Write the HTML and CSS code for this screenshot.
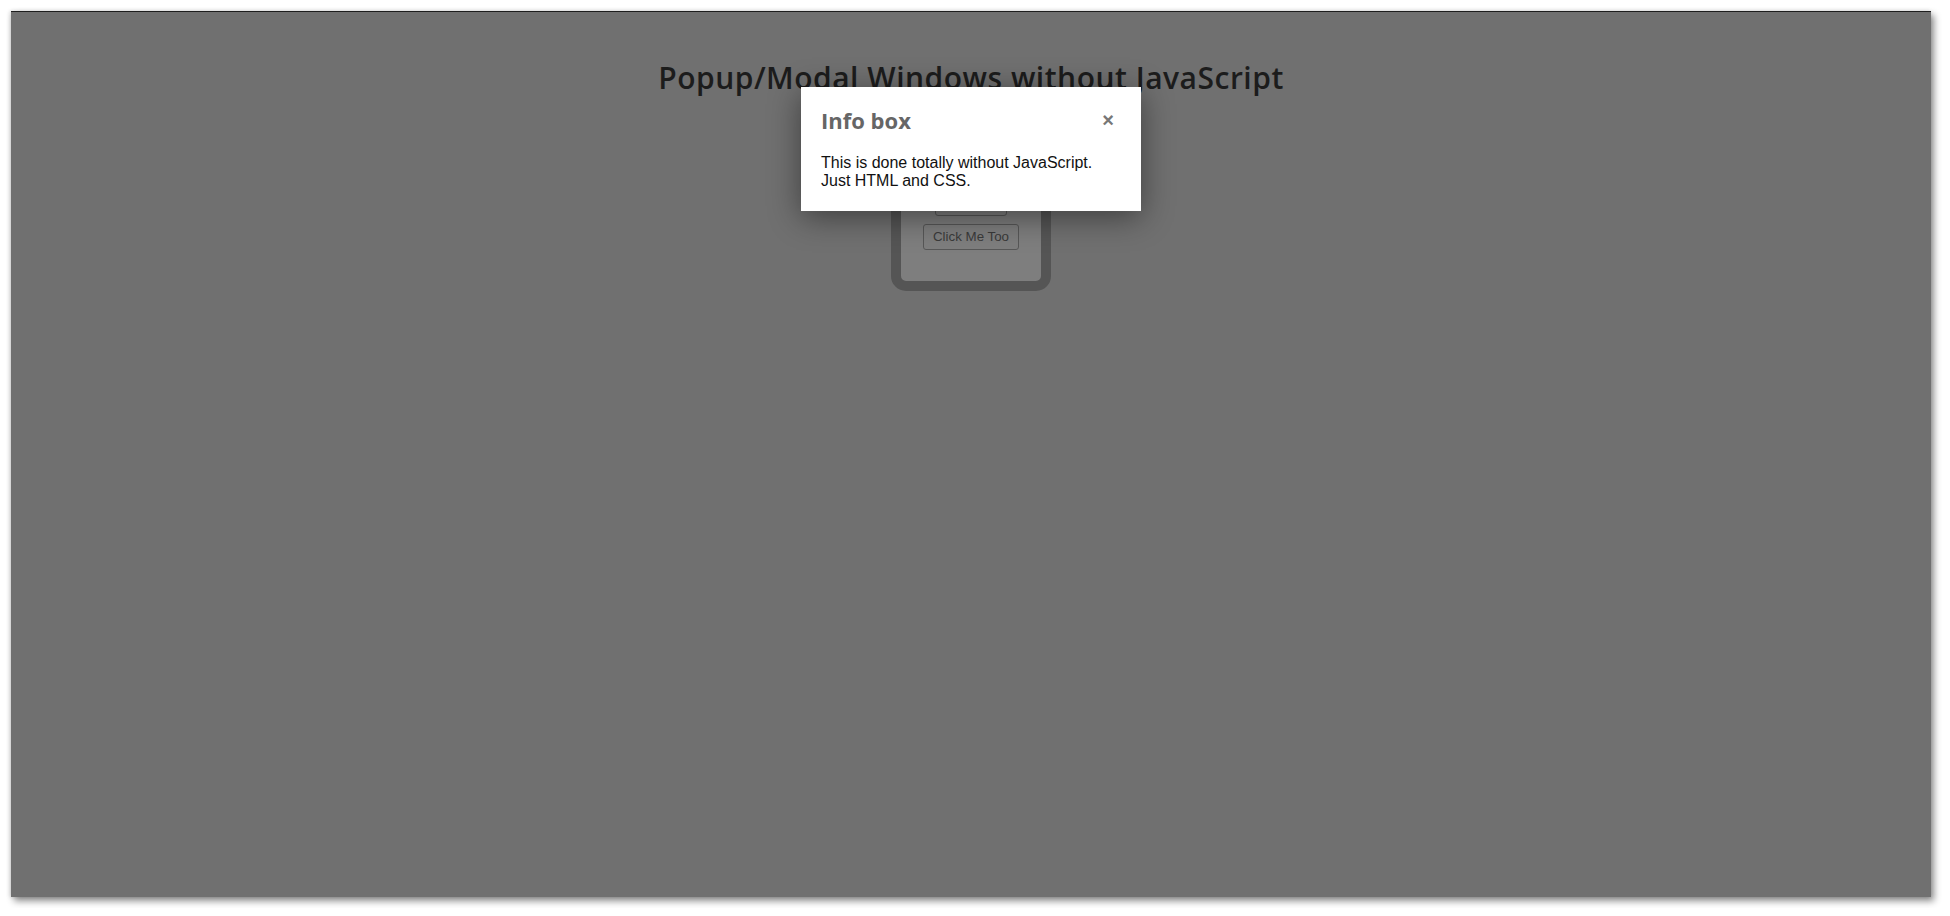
FILE: index.html
```html
<!DOCTYPE html>
<html lang="en">
<head>
<meta charset="utf-8">
<title>Popup/Modal Windows without JavaScript</title>
<link rel="stylesheet" href="styles.css">
</head>
<body>
<div class="viewport">
  <main class="page">
    <h1 class="title">Popup/Modal Windows without JavaScript</h1>
    <div class="box">
      <button class="btn" type="button">Click Me</button>
      <button class="btn" type="button">Click Me Too</button>
    </div>
  </main>
  <div class="overlay">
    <div class="popup">
      <div class="popup-head">
        <h2 class="popup-title">Info box</h2>
        <span class="close">&times;</span>
      </div>
      <p class="popup-text">This is done totally without JavaScript.<br>Just HTML and CSS.</p>
    </div>
  </div>
</div>
</body>
</html>
```
FILE: styles.css
```css
html, body {
  margin: 0;
  padding: 0;
  background: #ffffff;
}

body {
  padding: 11px;
  font-family: "Liberation Sans", Arial, sans-serif;
}

.viewport {
  position: relative;
  width: 1920px;
  height: 885px;
  background: #707070;
  border-top: 1px solid #1e1e1e;
  box-shadow: 3px 4px 7px rgba(0, 0, 0, 0.45), -1px 0 4px rgba(0, 0, 0, 0.15);
  overflow: hidden;
}

.page {
  display: flex;
  flex-direction: column;
  align-items: center;
  padding-top: 48px;
}

.title {
  margin: 0;
  font-family: "Open Sans", "Noto Sans", sans-serif;
  font-weight: 600;
  font-size: 30px;
  line-height: 36px;
  letter-spacing: 0.5px;
  color: #1c1c1c;
}

.box {
  margin-top: 16px;
  width: 140px;
  border: 10px solid #555555;
  border-radius: 15px;
  background: #7e7e7e;
  display: flex;
  flex-direction: column;
  align-items: center;
  gap: 8px;
  padding: 68px 0 31px;
}

.btn {
  font-family: "Liberation Sans", Arial, sans-serif;
  font-size: 13.33px;
  line-height: 16px;
  padding: 4px 9px;
  border: 1px solid #575757;
  border-radius: 3px;
  background: #7e7e7e;
  color: #3a3a3a;
}

.overlay {
  position: absolute;
  inset: 0;
}

.popup {
  position: absolute;
  top: 75px;
  left: 50%;
  margin-left: -170px;
  width: 300px;
  padding: 18px 20px 21px;
  background: #ffffff;
  box-shadow: 0 6px 30px rgba(0, 0, 0, 0.45);
}

.popup-head {
  display: flex;
  justify-content: space-between;
  align-items: center;
}

.popup-title {
  margin: 0;
  font-family: "Open Sans", "Noto Sans", sans-serif;
  font-weight: 700;
  font-size: 22px;
  line-height: 30px;
  color: #666666;
}

.close {
  font-family: "Liberation Sans", Arial, sans-serif;
  font-weight: 700;
  font-size: 20px;
  line-height: 20px;
  color: #777777;
  margin-right: 7px;
}

.popup-text {
  margin: 19px 0 0;
  font-size: 16px;
  line-height: 18px;
  color: #111111;
}
```
